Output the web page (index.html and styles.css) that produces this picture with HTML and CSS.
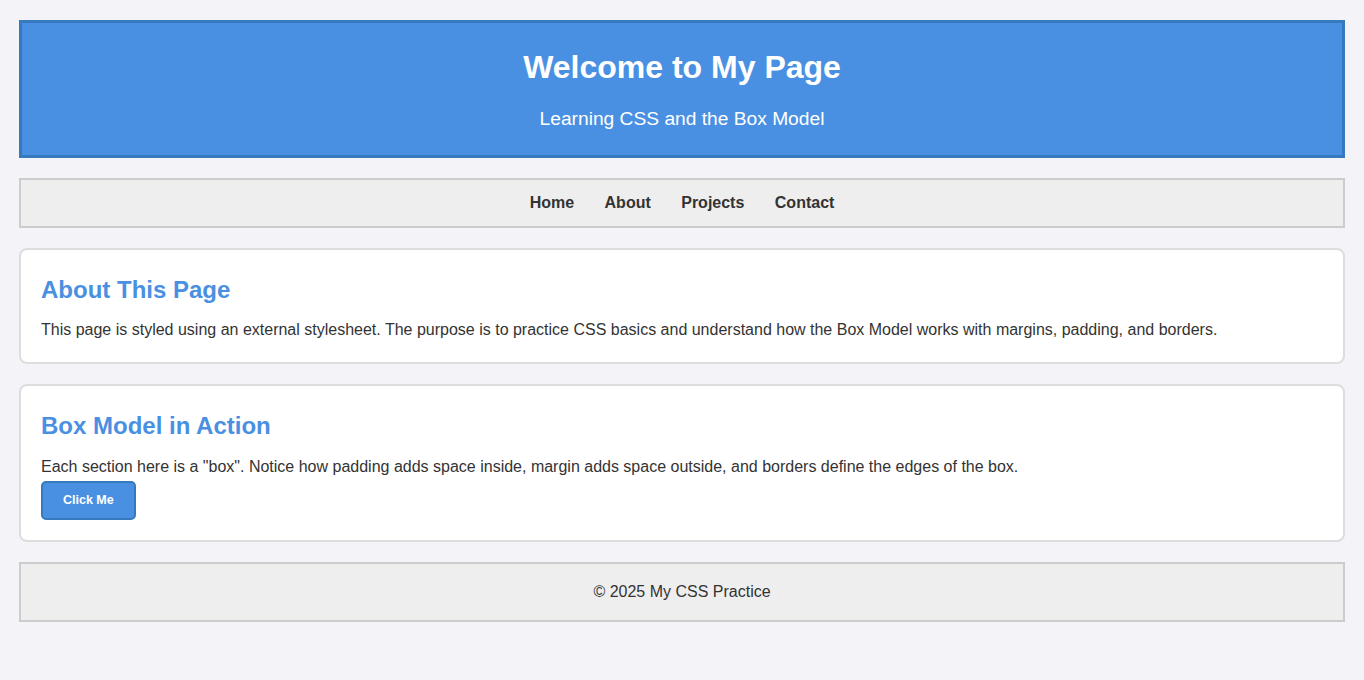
FILE: index.html
```html
<!DOCTYPE html>
<html lang="en">
<head>
<meta charset="utf-8">
<title>My CSS Practice</title>
<link rel="stylesheet" href="styles.css">
</head>
<body>
  <header class="site-header">
    <h1>Welcome to My Page</h1>
    <p>Learning CSS and the Box Model</p>
  </header>
  <nav class="site-nav">
    <a href="#">Home</a>
    <a href="#">About</a>
    <a href="#">Projects</a>
    <a href="#">Contact</a>
  </nav>
  <section class="box">
    <h2>About This Page</h2>
    <p>This page is styled using an external stylesheet. The purpose is to practice CSS basics and understand how the Box Model works with margins, padding, and borders.</p>
  </section>
  <section class="box">
    <h2>Box Model in Action</h2>
    <p>Each section here is a "box". Notice how padding adds space inside, margin adds space outside, and borders define the edges of the box.</p>
    <button class="btn">Click Me</button>
  </section>
  <footer class="site-footer">
    <p>&copy; 2025 My CSS Practice</p>
  </footer>
</body>
</html>
```
FILE: styles.css
```css
html, body {
  margin: 0;
  background: #f4f4f8;
}
body {
  padding: 20px 19px;
  font-family: "Liberation Sans", Arial, sans-serif;
  font-size: 16px;
  line-height: 1.6;
  color: #333;
}
.site-header {
  background: #4a90e2;
  color: #fff;
  border: 3px solid #357abd;
  padding: 19px 20px 20px;
  text-align: center;
}
.site-header h1 {
  margin: 0 0 11px;
  font-size: 32px;
}
.site-header p {
  margin: 0;
  font-size: 1.2em;
}
.site-nav {
  margin-top: 20px;
  background: #eee;
  border: 2px solid #ccc;
  padding: 10px;
  text-align: center;
}
.site-nav a {
  color: #333;
  font-weight: bold;
  text-decoration: none;
  margin: 0 13px;
}
.box {
  margin-top: 20px;
  background: #fff;
  border: 2px solid #ddd;
  border-radius: 8px;
  padding: 21px 20px 20px;
}
.box h2 {
  margin: 0 0 8px;
  font-size: 24px;
  color: #4a90e2;
}
.box p {
  margin: 0;
}
.btn {
  display: block;
  margin-top: 2px;
  background: #4a90e2;
  color: #fff;
  border: 2px solid #357abd;
  border-radius: 5px;
  padding: 10px 20px;
  font-family: "Liberation Sans", Arial, sans-serif;
  font-size: 12.5px;
  font-weight: bold;
  line-height: 15px;
  cursor: pointer;
}
.site-footer {
  margin-top: 20px;
  background: #eee;
  border: 2px solid #ccc;
  padding: 15px;
  text-align: center;
}
.site-footer p {
  margin: 0;
}
```
